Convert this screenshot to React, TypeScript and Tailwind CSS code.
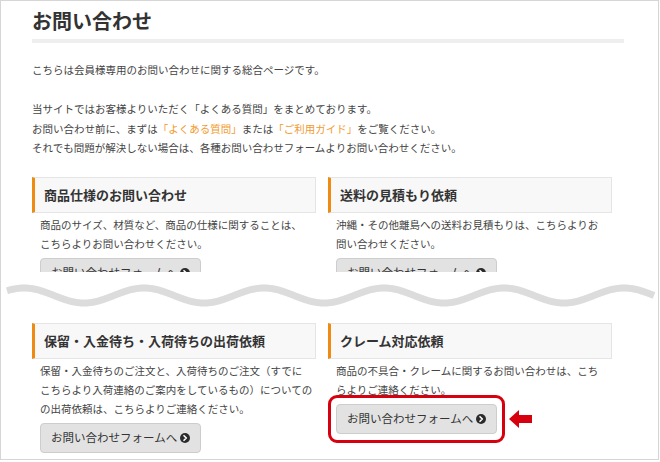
import React from "react";

function wavePath(): string {
  let d = "";
  for (let x = 6; x <= 653; x += 1) {
    const y = 23.5 - 7.5 * Math.cos((2 * Math.PI * (x - 23)) / 120);
    d += (x === 6 ? "M" : "L") + x + " " + y.toFixed(2) + " ";
  }
  return d;
}

function FormButton() {
  return (
    <div className="inline-flex h-[30px] items-center rounded-[4px] border border-[#cdcdcd] bg-[#e2e2e2] pl-[10px] pr-[10px] text-[11.5px] text-[#333] whitespace-nowrap">
      <span>お問い合わせフォームへ</span>
      <svg width="10" height="10" viewBox="0 0 10 10" className="ml-[3px]">
        <circle cx="5" cy="5" r="5" fill="#2b2b2b" />
        <path d="M4 2.7 L6.3 5 L4 7.3" stroke="#fff" strokeWidth="1.6" fill="none" strokeLinecap="round" strokeLinejoin="round" />
      </svg>
    </div>
  );
}

function Card({
  title,
  lines,
  highlight = false,
}: {
  title: string;
  lines: string[];
  highlight?: boolean;
}) {
  return (
    <div className="w-[284px]">
      <div className="flex h-[36px] items-center border border-[#e5e5e5] border-l-[3px] border-l-[#ef8a12] bg-[#f8f8f8] pl-[9px] text-[13px] font-bold text-[#333]">
        {title}
      </div>
      <div className="mt-[2px] px-[8px] text-[10.5px] leading-[19px] text-[#444] whitespace-nowrap">
        {lines.map((l, i) => (
          <div key={i}>{l}</div>
        ))}
      </div>
      <div className="mt-[5px] pl-[8px]">
        <div className="relative inline-block">
          <FormButton />
          {highlight && (
            <>
              <div className="absolute -left-[8px] -right-[8px] -top-[9px] -bottom-[9px] rounded-[9px] border-[3px] border-[#d7000f]" />
              <svg
                width="24"
                height="18"
                viewBox="0 0 24 18"
                className="absolute left-[calc(100%+12px)] top-1/2 -translate-y-1/2"
              >
                <polygon points="0,9 10,0 10,5 23,5 23,13 10,13 10,18" fill="#d7000f" />
              </svg>
            </>
          )}
        </div>
      </div>
    </div>
  );
}

export default function App() {
  return (
    <div className="h-[462px] w-[660px] bg-white font-['Noto_Sans_CJK_JP','Noto_Sans',sans-serif]">
      <div className="flex h-[460px] w-[659px] flex-col overflow-hidden border border-[#d6d6d6]">
        <div className="shrink-0 pl-[31px] pt-[7px]">
          <h1 className="text-[20px] font-bold leading-[26px] text-[#333]">お問い合わせ</h1>
          <div className="mt-[5px] h-[4px] w-[592px] bg-[#eeeeee]" />
          <div className="mt-[17px] text-[10.5px] leading-[19.5px] text-[#444] whitespace-nowrap">
            <div>こちらは会員様専用のお問い合わせに関する総合ページです。</div>
            <div>&nbsp;</div>
            <div>当サイトではお客様よりいただく「よくある質問」をまとめております。</div>
            <div>
              お問い合わせ前に、まずは<span className="text-[#f29a2e]">「よくある質問」</span>または
              <span className="text-[#f29a2e]">「ご利用ガイド」</span>をご覧ください。
            </div>
            <div>それでも問題が解決しない場合は、各種お問い合わせフォームよりお問い合わせください。</div>
          </div>
          <div className="mt-[19.5px] grid h-[95px] grid-cols-[284px_284px] gap-x-[12px] overflow-hidden">
            <Card
              title="商品仕様のお問い合わせ"
              lines={["商品のサイズ、材質など、商品の仕様に関することは、", "こちらよりお問い合わせください。"]}
            />
            <Card
              title="送料の見積もり依頼"
              lines={["沖縄・その他離島への送料お見積もりは、こちらよりお", "問い合わせください。"]}
            />
          </div>
        </div>
        <div className="h-[51px] shrink-0">
          <svg width="657" height="51" viewBox="0 0 657 51">
            <path d={wavePath()} stroke="#dcdcdc" strokeWidth="7" fill="none" />
          </svg>
        </div>
        <div className="shrink-0 pl-[31px]">
          <div className="grid grid-cols-[284px_284px] gap-x-[12px]">
            <Card
              title="保留・入金待ち・入荷待ちの出荷依頼"
              lines={[
                "保留・入金待ちのご注文と、入荷待ちのご注文（すでに",
                "こちらより入荷連絡のご案内をしているもの）についての",
                "の出荷依頼は、こちらよりご連絡ください。",
              ]}
            />
            <Card
              title="クレーム対応依頼"
              lines={["商品の不具合・クレームに関するお問い合わせは、こち", "らよりご連絡ください。"]}
              highlight
            />
          </div>
        </div>
      </div>
    </div>
  );
}
